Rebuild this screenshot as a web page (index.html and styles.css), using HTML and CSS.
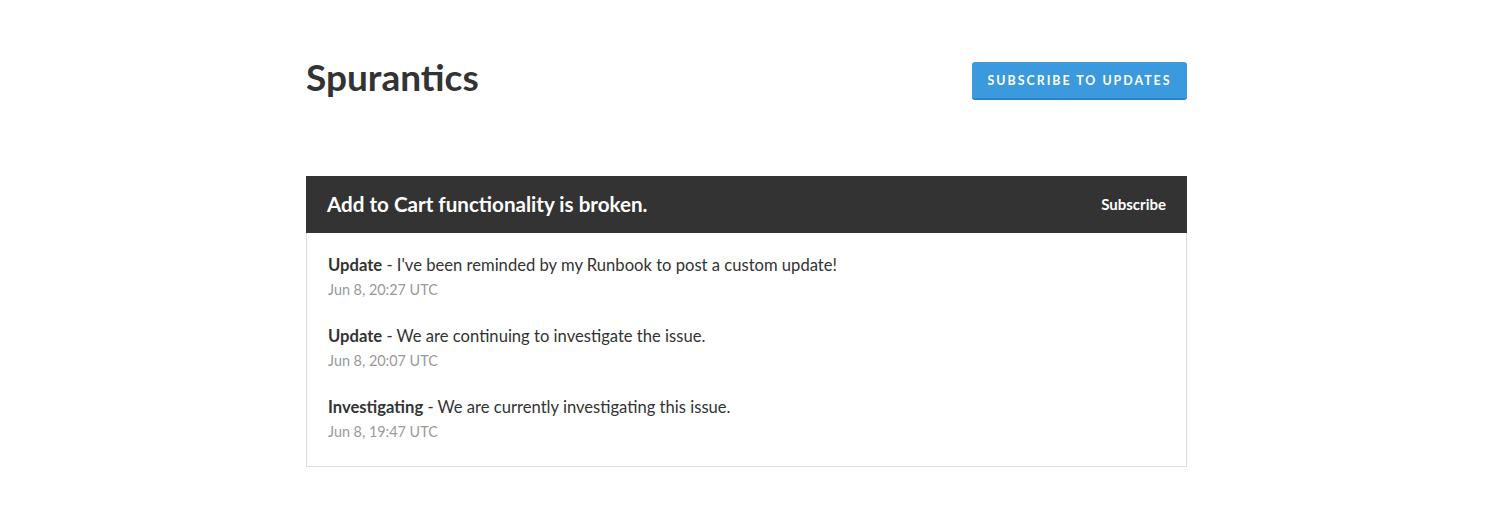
FILE: index.html
```html
<!DOCTYPE html>
<html lang="en">
<head>
    <meta charset="UTF-8">
    <title>Spurantics - Add to Cart functionality is broken.</title>
    <link rel="stylesheet" href="styles.css">
</head>
<body>
    <div class="page">
        <div class="page-header">
            <h1 class="page-title">Spurantics</h1>
            <a class="subscribe-btn" href="#">Subscribe to Updates</a>
        </div>

        <div class="incident">
            <div class="incident-head">
                <span class="incident-name">Add to Cart functionality is broken.</span>
                <a class="incident-subscribe" href="#">Subscribe</a>
            </div>
            <div class="incident-updates">
                <div class="update">
                    <div class="update-body"><strong>Update</strong> - I've been reminded by my Runbook to post a custom update!</div>
                    <div class="update-time">Jun 8, 20:27 UTC</div>
                </div>
                <div class="update">
                    <div class="update-body"><strong>Update</strong> - We are continuing to investigate the issue.</div>
                    <div class="update-time">Jun 8, 20:07 UTC</div>
                </div>
                <div class="update">
                    <div class="update-body"><strong>Investigating</strong> - We are currently investigating this issue.</div>
                    <div class="update-time">Jun 8, 19:47 UTC</div>
                </div>
            </div>
        </div>
    </div>
</body>
</html>
```

FILE: styles.css
```css
body {
    margin: 0;
    padding-left: 7px;
    font-family: Lato, "Liberation Sans", sans-serif;
    background-color: white;
    color: #333;
}
.page {
    width: 881px;
    margin: 0 auto;
    padding-top: 62px;
}
.page-header {
    display: flex;
    justify-content: space-between;
    align-items: flex-start;
}
.page-title {
    margin: 0;
    font-size: 37px;
    font-weight: 700;
    line-height: 30px;
    color: #333;
}
.subscribe-btn {
    display: block;
    width: 215px;
    height: 38px;
    line-height: 38px;
    box-sizing: border-box;
    text-align: center;
    background: #3b99dd;
    border-radius: 3px;
    border-bottom: 2px solid #2f85c4;
    color: white;
    text-decoration: none;
    text-transform: uppercase;
    font-size: 12.4px;
    font-weight: 700;
    letter-spacing: 2px;
}
.incident {
    margin-top: 76px;
}
.incident-head {
    display: flex;
    justify-content: space-between;
    align-items: center;
    height: 57px;
    box-sizing: border-box;
    padding: 0 21px 2px;
    background: #333;
    color: white;
}
.incident-name {
    font-size: 20.6px;
    font-weight: 700;
}
.incident-subscribe {
    margin-top: 1px;
    color: white;
    text-decoration: none;
    font-size: 15px;
    font-weight: 700;
}
.incident-updates {
    border: 1px solid #ddd;
    border-top: none;
    padding: 21px 21px 24px;
}
.update {
    margin-bottom: 25px;
}
.update:last-child {
    margin-bottom: 0;
}
.update-body {
    font-size: 16.6px;
    line-height: 22px;
}
.update-time {
    margin-top: 4px;
    font-size: 14.4px;
    line-height: 20px;
    color: #999;
}
```
